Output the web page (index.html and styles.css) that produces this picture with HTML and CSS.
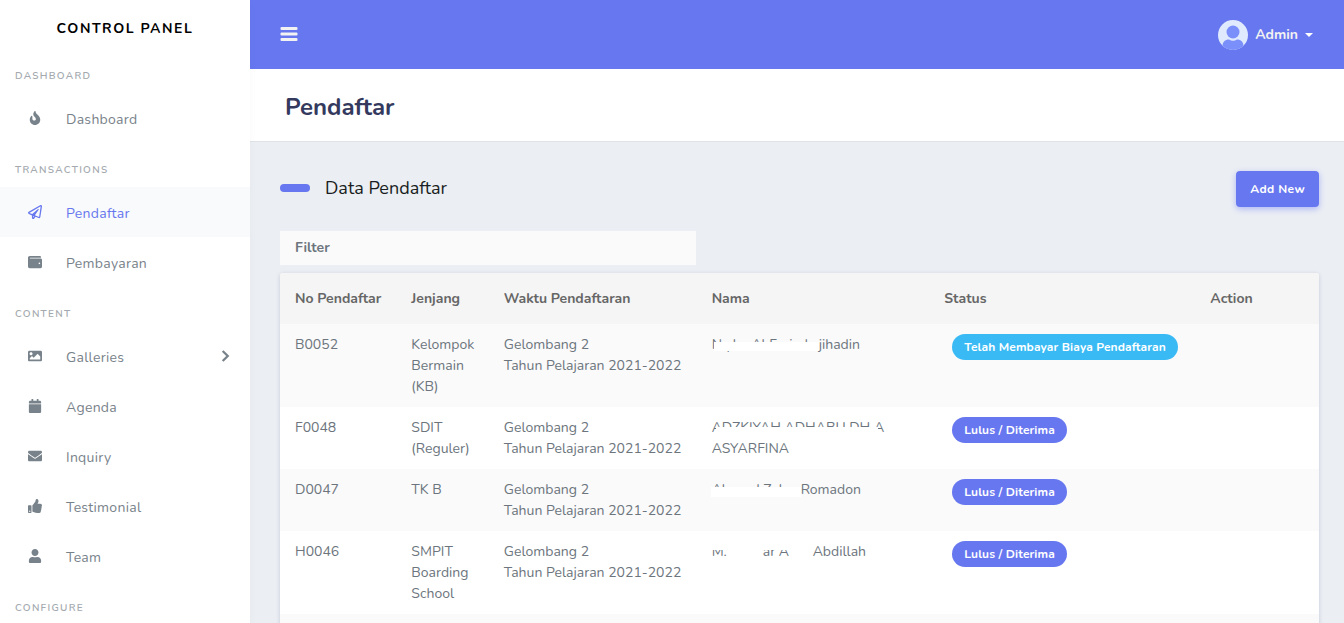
FILE: index.html
```html
<!DOCTYPE html>
<html lang="id">
<head>
<meta charset="utf-8">
<meta name="viewport" content="width=device-width, initial-scale=1">
<title>Pendaftar - Control Panel</title>
<link rel="stylesheet" href="styles.css">
</head>
<body>
<div class="layout">
  <aside class="sidebar">
    <a class="brand" href="#">CONTROL PANEL</a>
    <nav class="menu">
      <h2 class="menu-header">DASHBOARD</h2>
      <a class="menu-item" href="#"><svg class="icon" viewBox="0 0 384 512"><path d="M216 23.86c0-23.8-30.65-32.77-44.15-13.04C48 191.85 224 200 224 288c0 35.63-29.11 64.46-64.85 63.99-35.17-.45-63.15-29.77-63.15-64.94v-85.51c0-21.7-26.47-32.23-41.43-16.5C27.8 213.16 0 261.33 0 320c0 105.87 86.13 192 192 192s192-86.13 192-192c0-170.29-168-193-168-296.14z"/></svg><span>Dashboard</span></a>
      <h2 class="menu-header">TRANSACTIONS</h2>
      <a class="menu-item active" href="#"><svg class="icon" viewBox="0 0 512 512"><path d="M440 6.5L24 246.4c-34.4 19.9-31.1 70.8 5.7 85.9L144 379.6V464c0 46.4 59.2 65.5 86.6 28.6l43.8-59.1 111.9 46.2c5.9 2.4 12.1 3.6 18.3 3.6 8.2 0 16.3-2.1 23.6-6.2 12.8-7.2 21.6-20 23.9-34.5l59.4-387.2c6.1-40.1-36.9-68.8-71.5-48.9zM192 464v-64.6l36.6 15.1L192 464zm212.6-28.7l-153.8-63.5L391 169.5c10.7-15.5-9.5-33.5-23.7-21.2L155.8 332.6 48 288 464 48l-59.4 387.3z"/></svg><span>Pendaftar</span></a>
      <a class="menu-item" href="#"><svg class="icon" viewBox="0 0 512 512"><path d="M461.2 128H80c-8.84 0-16-7.16-16-16s7.16-16 16-16h384c8.84 0 16-7.16 16-16 0-26.51-21.49-48-48-48H64C28.65 32 0 60.65 0 96v320c0 35.35 28.65 64 64 64h397.2c28.02 0 50.8-21.53 50.8-48V176c0-26.47-22.78-48-50.8-48zM416 336c-17.67 0-32-14.33-32-32s14.33-32 32-32 32 14.33 32 32-14.33 32-32 32z"/></svg><span>Pembayaran</span></a>
      <h2 class="menu-header">CONTENT</h2>
      <a class="menu-item" href="#"><svg class="icon" viewBox="0 0 512 512"><path d="M464 448H48c-26.51 0-48-21.49-48-48V112c0-26.51 21.49-48 48-48h416c26.51 0 48 21.49 48 48v288c0 26.51-21.49 48-48 48zM112 120c-30.928 0-56 25.072-56 56s25.072 56 56 56 56-25.072 56-56-25.072-56-56-56zM64 384h384V272l-87.515-87.515c-4.686-4.686-12.284-4.686-16.971 0L208 320l-55.515-55.515c-4.686-4.686-12.284-4.686-16.971 0L64 336v48z"/></svg><span>Galleries</span><svg class="chevron" viewBox="0 0 8 12"><path d="M1.5 1.5L6 6l-4.500 4.500"/></svg></a>
      <a class="menu-item" href="#"><svg class="icon" viewBox="0 0 448 512"><path d="M12 192h424c6.600 0 12 5.400 12 12v260c0 26.500-21.500 48-48 48H48c-26.500 0-48-21.500-48-48V204c0-6.600 5.400-12 12-12zm436-44v-36c0-26.500-21.500-48-48-48h-48V12c0-6.600-5.400-12-12-12h-40c-6.600 0-12 5.400-12 12v52H160V12c0-6.600-5.400-12-12-12h-40c-6.600 0-12 5.400-12 12v52H48C21.500 64 0 85.500 0 112v36c0 6.600 5.400 12 12 12h424c6.600 0 12-5.400 12-12z"/></svg><span>Agenda</span></a>
      <a class="menu-item" href="#"><svg class="icon" viewBox="0 0 512 512"><path d="M502.3 190.8c3.9-3.1 9.7-.2 9.7 4.700V400c0 26.500-21.500 48-48 48H48c-26.500 0-48-21.500-48-48V195.600c0-5 5.700-7.800 9.700-4.700 22.400 17.400 52.100 39.500 154.100 113.600 21.100 15.400 56.700 47.800 92.200 47.600 35.700.3 72-32.800 92.300-47.600 102-74.100 131.600-96.300 154-113.700zM256 320c23.200.4 56.600-29.200 73.400-41.400 132.700-96.300 142.800-104.700 173.400-128.700 5.800-4.500 9.200-11.500 9.200-18.900v-19c0-26.500-21.500-48-48-48H48c-26.500 0-48 21.500-48 48v19c0 7.400 3.400 14.300 9.200 18.900 30.600 23.900 40.700 32.400 173.400 128.700 16.800 12.200 50.200 41.800 73.400 41.400z"/></svg><span>Inquiry</span></a>
      <a class="menu-item" href="#"><svg class="icon" viewBox="0 0 512 512"><path d="M104 224H24c-13.255 0-24 10.745-24 24v240c0 13.255 10.745 24 24 24h80c13.255 0 24-10.745 24-24V248c0-13.255-10.745-24-24-24zM64 472c-13.255 0-24-10.745-24-24s10.745-24 24-24 24 10.745 24 24-10.745 24-24 24zM384 81.452c0 42.416-25.970 66.208-33.277 94.548h101.723c33.397 0 59.397 27.746 59.553 58.098.084 17.938-7.546 37.249-19.439 49.197l-.11.11c9.836 23.337 8.237 56.037-9.308 79.469 8.681 25.895-.069 57.704-16.382 74.757 4.298 17.598 2.244 32.575-6.148 44.632C440.202 511.587 389.616 512 346.839 512l-2.845-.001c-48.287-.017-87.806-17.598-119.560-31.725-15.957-7.099-36.821-15.887-52.651-16.178-6.540-.12-11.783-5.457-11.783-11.998v-213.770c0-3.200 1.282-6.271 3.558-8.521 39.614-39.144 56.648-80.587 89.117-113.111 14.804-14.832 20.188-37.236 25.393-58.902C282.515 39.293 291.817 0 312 0c24 0 72 8 72 81.452z"/></svg><span>Testimonial</span></a>
      <a class="menu-item" href="#"><svg class="icon" viewBox="0 0 448 512"><path d="M224 256c70.700 0 128-57.300 128-128S294.700 0 224 0 96 57.300 96 128s57.300 128 128 128zm89.600 32h-16.700c-22.200 10.200-46.900 16-72.900 16s-50.600-5.800-72.900-16h-16.700C60.200 288 0 348.200 0 422.400V464c0 26.500 21.500 48 48 48h352c26.500 0 48-21.500 48-48v-41.600c0-74.200-60.200-134.400-134.400-134.400z"/></svg><span>Team</span></a>
      <h2 class="menu-header">CONFIGURE</h2>
    </nav>
  </aside>

  <div class="page">
    <header class="topbar">
      <button class="toggle" type="button" aria-label="Menu"><svg viewBox="0 0 18 16"><rect x="0.500" y="0" width="17" height="3" rx="1"/><rect x="0.500" y="5.500" width="17" height="3" rx="1"/><rect x="0.500" y="11" width="17" height="3" rx="1"/></svg></button>
      <button class="account" type="button">
        <svg class="avatar" viewBox="0 0 30 30"><defs><clipPath id="face"><circle cx="15" cy="15" r="15"/></clipPath></defs><g clip-path="url(#face)"><rect width="30" height="30" fill="#e0eaff"/><circle cx="15" cy="12" r="6.500" fill="#7b8ffb"/><path d="M4.500 30v-4c0-4 2.500-6.500 6.500-6.500 1.500 1 2.500 1.300 4 1.300s2.500-.3 4-1.300c4 0 6.500 2.500 6.500 6.500v4z" fill="#7b8ffb"/></g></svg>
        <span>Admin</span><span class="caret"></span>
      </button>
    </header>

    <div class="page-header"><h1>Pendaftar</h1></div>

    <main class="content">
      <div class="title-row">
        <h2 class="section-title">Data Pendaftar</h2>
        <button class="add" type="button">Add New</button>
      </div>
      <button class="filter" type="button">Filter</button>
      <div class="card">
        <table>
          <colgroup><col class="c-no"><col class="c-level"><col class="c-time"><col class="c-name"><col class="c-status"><col></colgroup>
          <thead><tr><th>No Pendaftar</th><th>Jenjang</th><th>Waktu Pendaftaran</th><th>Nama</th><th>Status</th><th>Action</th></tr></thead>
          <tbody>
            <tr><td>B0052</td><td>Kelompok Bermain (KB)</td><td>Gelombang 2<br>Tahun Pelajaran 2021-2022</td><td><span class="masked mask-a">N yl&nbsp; &nbsp; Al F&nbsp; ri &nbsp;d</span>jihadin</td><td><span class="badge info">Telah Membayar Biaya Pendaftaran</span></td><td></td></tr>
            <tr><td>F0048</td><td>SDIT (Reguler)</td><td>Gelombang 2<br>Tahun Pelajaran 2021-2022</td><td><span class="masked mask-b">ADZKIYAH ADHABU DH A</span><br>ASYARFINA</td><td><span class="badge">Lulus / Diterima</span></td><td></td></tr>
            <tr><td>D0047</td><td>TK B</td><td>Gelombang 2<br>Tahun Pelajaran 2021-2022</td><td><span class="masked mask-c">Ah&nbsp; &nbsp; &nbsp; d Z &nbsp;ky</span>Romadon</td><td><span class="badge">Lulus / Diterima</span></td><td></td></tr>
            <tr><td>H0046</td><td>SMPIT Boarding School</td><td>Gelombang 2<br>Tahun Pelajaran 2021-2022</td><td><span class="masked mask-d"><span>M.</span><span>ar A</span></span>Abdillah</td><td><span class="badge">Lulus / Diterima</span></td><td></td></tr>
            <tr><td></td><td></td><td></td><td></td><td></td><td></td></tr>
          </tbody>
        </table>
      </div>
    </main>
  </div>
</div>
</body>
</html>
```
FILE: styles.css
```css
* { box-sizing: border-box; }

body {
  margin: 0;
  background: #ebeef3;
  color: #6c757d;
  font: 400 14px/21px Nunito, "Open Sans", "Noto Sans", sans-serif;
}

html, body { height: 100%; overflow: hidden; }
h1, h2 { margin: 0; }
a { color: inherit; text-decoration: none; }
button { border: 0; font: inherit; cursor: pointer; }

.layout { display: flex; height: 100%; }

.sidebar {
  flex: none;
  width: 250px;
  background: #fff;
  box-shadow: 0 4px 8px rgba(0, 0, 0, .03);
  overflow: hidden;
  z-index: 1;
}
.brand {
  display: block;
  padding-top: 9px;
  color: #000;
  font-weight: 700;
  letter-spacing: .11em;
  line-height: 40px;
  text-align: center;
}
.menu-header {
  height: 44px;
  padding: 17px 15px 0;
  color: #a3a9ae;
  font-size: 10px;
  font-weight: 600;
  letter-spacing: .13em;
  line-height: 20px;
}
.menu-item {
  display: flex;
  align-items: center;
  height: 50px;
  padding: 0 20px;
  color: #78828a;
  letter-spacing: .02em;
}
.menu-item span { padding-top: 2px; }
.menu-item.active { background: #f8fafb; color: #6777ef; }
.icon {
  width: 30px;
  height: 14px;
  margin-right: 16px;
  fill: currentColor;
}
.chevron {
  width: 9px;
  height: 14px;
  margin-left: auto;
  fill: none;
  stroke: currentColor;
  stroke-width: 2;
}

.page { flex: 1; min-width: 0; overflow: hidden; }
.topbar {
  display: flex;
  align-items: center;
  justify-content: space-between;
  height: 69px;
  padding: 0 31px 0 30px;
  background: #6777ef;
}
.toggle { padding: 0; background: none; }
.toggle svg { display: block; width: 18px; height: 16px; fill: #f2f2f2; }
.account {
  display: flex;
  align-items: center;
  gap: 7px;
  padding: 0;
  background: none;
  color: #f2f2f2;
  font-weight: 700;
}
.avatar { width: 30px; height: 30px; }
.caret { border: 4px solid transparent; border-top-color: #fff; border-bottom: 0; }

.page-header {
  padding: 22px 35px 18px;
  background: #fff;
  border-bottom: 1px solid #dfe3e6;
}
.page-header h1 {
  color: #34395e;
  font-size: 24px;
  font-weight: 700;
  line-height: 32px;
}

.content { padding: 29px 25px 0 30px; }
.title-row { display: flex; align-items: center; justify-content: space-between; }
.section-title {
  display: flex;
  align-items: center;
  gap: 15px;
  padding-bottom: 2px;
  color: #191d21;
  font-size: 18px;
  font-weight: 400;
}
.section-title::before {
  content: "";
  width: 30px;
  height: 8px;
  border-radius: 4px;
  background: #6777ef;
}
.add {
  height: 36px;
  padding: 0 14px;
  border-radius: 4px;
  background: #6777ef;
  box-shadow: 0 2px 6px #acb5f6;
  color: #fff;
  font-size: 12px;
  font-weight: 700;
  letter-spacing: .03em;
}
.filter {
  display: block;
  width: 40%;
  height: 34px;
  margin: 24px 0 8px;
  padding: 0 15px 2px;
  background: #fafafa;
  color: #6c757d;
  font-weight: 700;
  text-align: left;
}
.card {
  border-radius: 3px;
  background: #fff;
  box-shadow: 0 1px 4px rgba(60, 70, 100, .2);
  overflow: hidden;
}
table { width: 100%; border-collapse: collapse; table-layout: fixed; }
.c-no { width: 11.2%; }
.c-level { width: 8.9%; }
.c-time { width: 20%; }
.c-name { width: 22.4%; }
.c-status { width: 25.6%; }
th {
  padding: 15px;
  background: #f5f5f5;
  color: #666;
  font-weight: 700;
  text-align: left;
}
td { height: 62px; padding: 10px 15px; vertical-align: top; }
td:nth-child(3), td:nth-child(4), td:nth-child(5) { white-space: nowrap; }
tbody tr:nth-child(odd) { background: #fafafa; }

.badge {
  display: inline-block;
  margin-left: 8px;
  padding: 0 12px;
  border-radius: 13px;
  background: #6777ef;
  color: #fff;
  font-size: 12px;
  font-weight: 700;
  letter-spacing: .01em;
  line-height: 26px;
  vertical-align: top;
}
.badge.info { background: #3abaf4; }

/* Names are partly hidden by a cover laid over the text. */
.masked {
  display: inline-block;
  position: relative;
  height: 21px;
  vertical-align: top;
}
.masked::after {
  content: "";
  position: absolute;
  left: 2px;
  right: 0;
  top: 8px;
  height: 9px;
  background: #fff;
}
.mask-a { width: 107px; }
.mask-b { width: 174px; }
.mask-b::after { top: 10px; left: 4px; right: 8px; }
.mask-c { width: 89px; }
.mask-c::after { left: -1px; height: 10px; }
.mask-d { display: inline-flex; gap: 36px; width: 101px; }
.mask-d::after { left: 0; top: 3px; height: 6px; }
```
